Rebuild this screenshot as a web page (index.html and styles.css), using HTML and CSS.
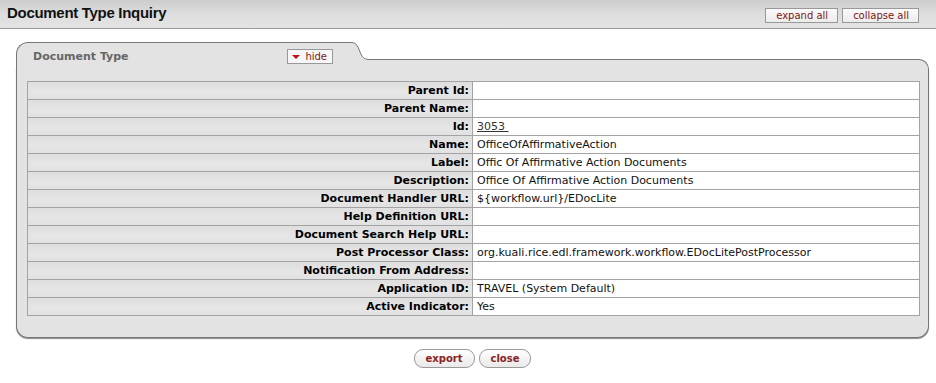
FILE: index.html
```html
<!DOCTYPE html>
<html lang="en">
<head>
    <meta charset="UTF-8">
    <title>Document Type Inquiry</title>
    <link rel="stylesheet" href="styles.css">
</head>
<body>
    <div class="header">
        <h1>Document Type Inquiry</h1>
        <div class="header-buttons">
            <button class="btn-small">expand all</button>
            <button class="btn-small">collapse all</button>
        </div>
    </div>

    <div class="main">
        <div class="panel">
            <div class="panel-top">
                <div class="tab">
                    <span class="tab-title">Document Type</span>
                    <button class="btn-hide"><span class="arrow"></span>hide</button>
                </div>
                <svg class="tab-curve" width="16" height="27" viewBox="0 0 16 27">
                    <path d="M0 0.5 C9 0.5 6 17.5 16 17.5 L16 27 L0 27 Z" fill="#e3e3e3"/>
                    <path d="M0 0.5 C9 0.5 6 17.5 16 17.5" fill="none" stroke="#777" stroke-width="1"/>
                </svg>
                <div class="tab-fill"></div>
            </div>
            <div class="panel-body">
                <table class="datatable">
                    <tr><th>Parent Id:</th><td></td></tr>
                    <tr><th>Parent Name:</th><td></td></tr>
                    <tr><th>Id:</th><td><a href="#">3053&nbsp;</a></td></tr>
                    <tr><th>Name:</th><td>OfficeOfAffirmativeAction</td></tr>
                    <tr><th>Label:</th><td>Offic Of Affirmative Action Documents</td></tr>
                    <tr><th>Description:</th><td>Office Of Affirmative Action Documents</td></tr>
                    <tr><th>Document Handler URL:</th><td>${workflow.url}/EDocLite</td></tr>
                    <tr><th>Help Definition URL:</th><td></td></tr>
                    <tr><th>Document Search Help URL:</th><td></td></tr>
                    <tr><th>Post Processor Class:</th><td>org.kuali.rice.edl.framework.workflow.EDocLitePostProcessor</td></tr>
                    <tr><th>Notification From Address:</th><td></td></tr>
                    <tr><th>Application ID:</th><td>TRAVEL (System Default)</td></tr>
                    <tr><th>Active Indicator:</th><td>Yes</td></tr>
                </table>
            </div>
        </div>

        <div class="actions">
            <button class="btn-round">export</button>
            <button class="btn-round">close</button>
        </div>
    </div>
</body>
</html>
```

FILE: styles.css
```css
body {
    margin: 0;
    padding: 0;
    background: #fff;
    font-family: 'DejaVu Sans', Verdana, sans-serif;
    font-size: 11px;
    color: #000;
}
.header {
    height: 28px;
    border-bottom: 1px solid #999;
    background: linear-gradient(to bottom, #cccccc, #dcdcdc 45%, #e4e4e4);
    display: flex;
    justify-content: space-between;
    align-items: flex-start;
    padding: 0 17px 0 7px;
}
h1 {
    margin: 0;
    padding-top: 4px;
    font-family: 'Liberation Sans', Arial, sans-serif;
    font-size: 15px;
    line-height: 17px;
    font-weight: bold;
    letter-spacing: -0.3px;
    color: #111;
}
.header-buttons {
    display: flex;
    gap: 4px;
    padding-top: 8px;
}
.btn-small {
    height: 15px;
    padding: 0 9px 0 10px;
    font-family: 'DejaVu Sans', Verdana, sans-serif;
    font-size: 10px;
    line-height: 13px;
    color: #7d1717;
    background: linear-gradient(to bottom, #fafafa, #ececec);
    border: 1px solid #999;
    cursor: pointer;
}
.main {
    padding-top: 13px;
}
.panel {
    margin: 0 7px 0 16px;
}
.panel-top {
    display: flex;
    height: 27px;
}
.tab {
    box-sizing: border-box;
    width: 336px;
    height: 27px;
    border-top: 1px solid #777;
    border-left: 1px solid #777;
    border-top-left-radius: 12px;
    background: #e3e3e3;
    display: flex;
    align-items: flex-start;
    padding: 7px 19px 0 16px;
}
.tab-title {
    font-weight: bold;
    color: #666;
    line-height: 13px;
}
.btn-hide {
    margin-left: auto;
    margin-top: -1px;
    height: 15px;
    padding: 0 5px 0 4px;
    font-family: 'DejaVu Sans', Verdana, sans-serif;
    font-size: 10px;
    line-height: 13px;
    color: #7d1717;
    background: #f6f6f6;
    border: 1px solid #999;
    display: flex;
    align-items: center;
    cursor: pointer;
}
.arrow {
    width: 0;
    height: 0;
    border-left: 4px solid transparent;
    border-right: 4px solid transparent;
    border-top: 4px solid #c01010;
    margin-right: 5px;
    margin-top: 1px;
}
.tab-curve {
    display: block;
    flex: none;
}
.tab-fill {
    flex: 1;
    box-sizing: border-box;
    margin-top: 17px;
    height: 10px;
    border-top: 1px solid #777;
    border-right: 1px solid #777;
    border-top-right-radius: 10px;
    background: #e3e3e3;
}
.panel-body {
    background: #e3e3e3;
    border: 1px solid #777;
    border-top: none;
    border-radius: 0 0 12px 12px;
    padding: 12px 8px 21px 10px;
    box-shadow: 0 1px 1px #8a8a8a;
}
.datatable {
    width: 100%;
    border-collapse: collapse;
}
.datatable th,
.datatable td {
    border: 1px solid #a3a3a3;
    height: 18px;
    padding: 0;
    line-height: 14px;
    box-sizing: border-box;
}
.datatable th {
    width: 445px;
    text-align: right;
    padding-right: 3px;
    font-weight: bold;
    background: linear-gradient(to bottom, #dedede, #e6e6e6 55%, #e1e1e1);
}
.datatable td {
    background: #fff;
    padding-left: 4px;
    color: #111;
}
.datatable a {
    color: #333;
}
.actions {
    display: flex;
    justify-content: center;
    gap: 4px;
    margin: 11px 7px 0 16px;
}
.btn-round {
    height: 19px;
    padding: 0 11px;
    font-family: 'DejaVu Sans', Verdana, sans-serif;
    font-size: 10px;
    font-weight: bold;
    line-height: 17px;
    color: #8a2323;
    background: linear-gradient(to bottom, #ffffff, #e9e9e9);
    border: 1px solid #999;
    border-radius: 9px;
    cursor: pointer;
}
```
